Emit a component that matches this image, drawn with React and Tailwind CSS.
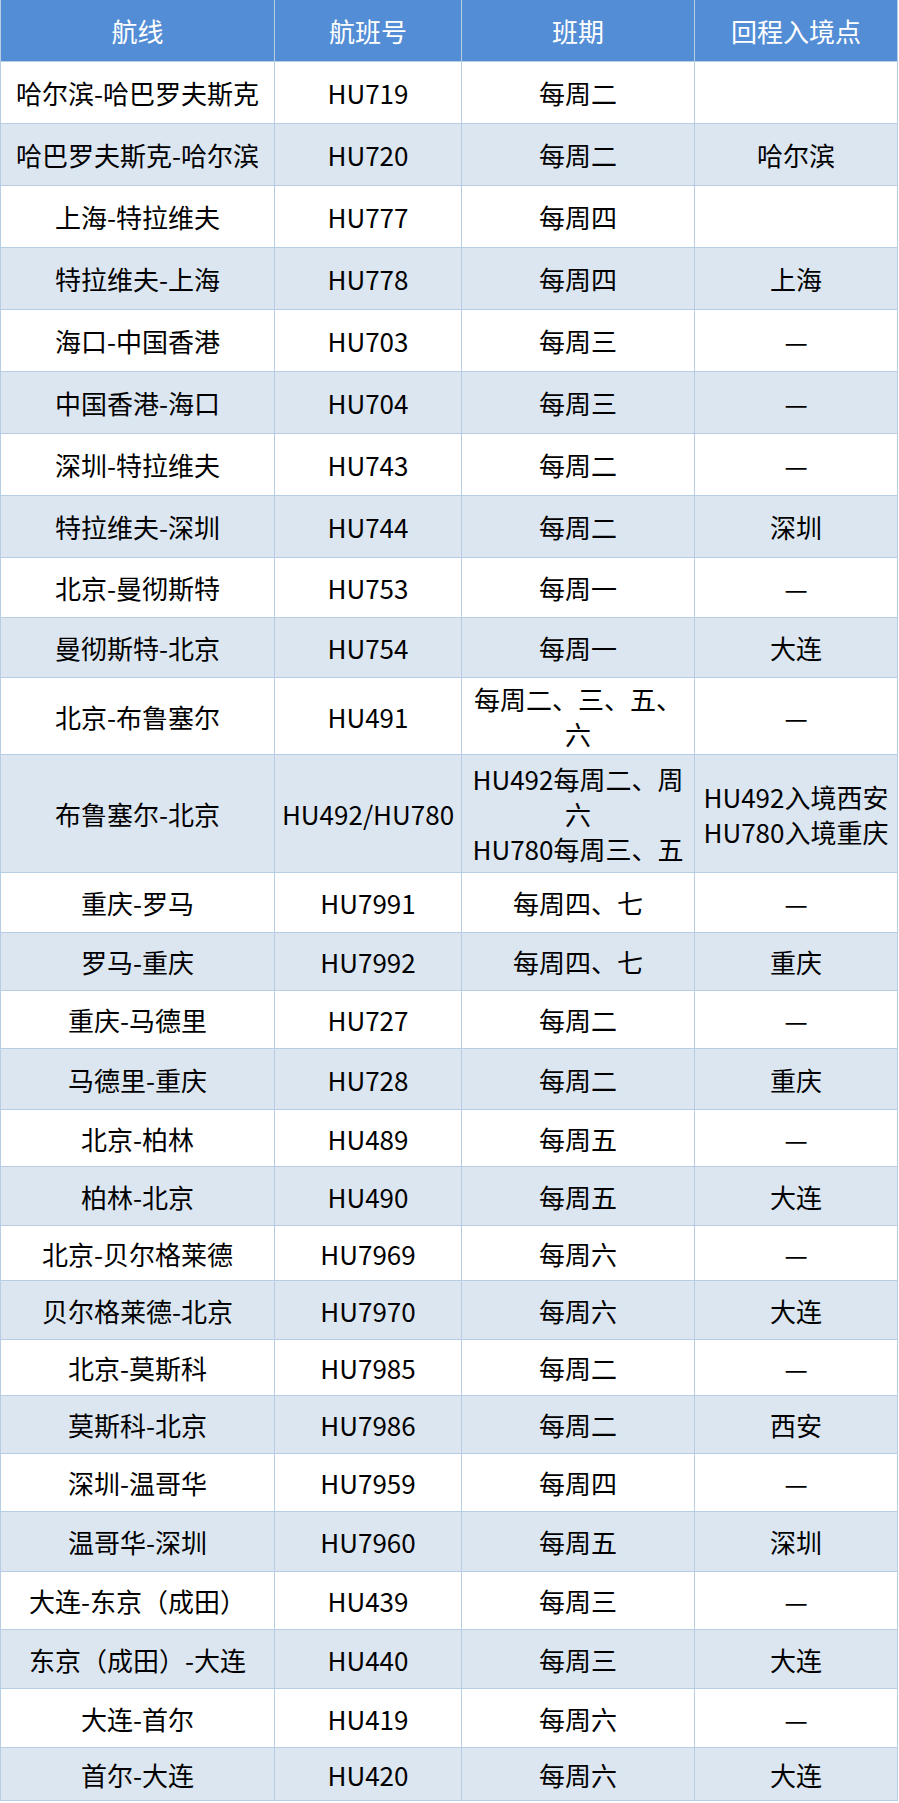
import React from "react";

const rows = [
  ["哈尔滨-哈巴罗夫斯克", "HU719", "每周二", "", "h-[62px]"],
  ["哈巴罗夫斯克-哈尔滨", "HU720", "每周二", "哈尔滨", "h-[62px]"],
  ["上海-特拉维夫", "HU777", "每周四", "", "h-[62px]"],
  ["特拉维夫-上海", "HU778", "每周四", "上海", "h-[62px]"],
  ["海口-中国香港", "HU703", "每周三", "—", "h-[62px]"],
  ["中国香港-海口", "HU704", "每周三", "—", "h-[62px]"],
  ["深圳-特拉维夫", "HU743", "每周二", "—", "h-[62px]"],
  ["特拉维夫-深圳", "HU744", "每周二", "深圳", "h-[62px]"],
  ["北京-曼彻斯特", "HU753", "每周一", "—", "h-[60px]"],
  ["曼彻斯特-北京", "HU754", "每周一", "大连", "h-[60px]"],
  ["北京-布鲁塞尔", "HU491", "每周二、三、五、六", "—", "h-[77px]"],
  ["布鲁塞尔-北京", "HU492/HU780", "HU492每周二、周六\nHU780每周三、五", "HU492入境西安\nHU780入境重庆", "h-[118px]"],
  ["重庆-罗马", "HU7991", "每周四、七", "—", "h-[60px]"],
  ["罗马-重庆", "HU7992", "每周四、七", "重庆", "h-[58px]"],
  ["重庆-马德里", "HU727", "每周二", "—", "h-[58px]"],
  ["马德里-重庆", "HU728", "每周二", "重庆", "h-[61px]"],
  ["北京-柏林", "HU489", "每周五", "—", "h-[57px]"],
  ["柏林-北京", "HU490", "每周五", "大连", "h-[59px]"],
  ["北京-贝尔格莱德", "HU7969", "每周六", "—", "h-[55px]"],
  ["贝尔格莱德-北京", "HU7970", "每周六", "大连", "h-[59px]"],
  ["北京-莫斯科", "HU7985", "每周二", "—", "h-[56px]"],
  ["莫斯科-北京", "HU7986", "每周二", "西安", "h-[58px]"],
  ["深圳-温哥华", "HU7959", "每周四", "—", "h-[58px]"],
  ["温哥华-深圳", "HU7960", "每周五", "深圳", "h-[60px]"],
  ["大连-东京（成田）", "HU439", "每周三", "—", "h-[58px]"],
  ["东京（成田）-大连", "HU440", "每周三", "大连", "h-[59px]"],
  ["大连-首尔", "HU419", "每周六", "—", "h-[59px]"],
  ["首尔-大连", "HU420", "每周六", "大连", "h-[53px]"],
];

function Cell({ children, last }) {
  return (
    <div
      className={
        "flex items-center justify-center text-center px-[2px] leading-[35px] whitespace-pre-line " +
        (last ? "" : "border-r border-[#b8cce4]")
      }
    >
      {children}
    </div>
  );
}

export default function App() {
  return (
    <div
      className="w-[899px] bg-white text-[26px] text-black"
      style={{ fontFamily: '"Noto Sans CJK SC", "Noto Sans", sans-serif' }}
    >
      <div className="w-[898px] border-l border-r border-[#b8cce4]">
        <div className="grid grid-cols-[274px_187px_233px_202px] h-[62px] bg-[#538dd5] text-white border-b border-[#b8cce4]">
          <Cell>航线</Cell>
          <Cell>航班号</Cell>
          <Cell>班期</Cell>
          <Cell last>回程入境点</Cell>
        </div>
        {rows.map((r, i) => (
          <div
            key={i}
            className={
              "grid grid-cols-[274px_187px_233px_202px] border-b border-[#b8cce4] " +
              r[4] +
              " " +
              (i % 2 === 1 ? "bg-[#dce6f1]" : "bg-white")
            }
          >
            <Cell>{r[0]}</Cell>
            <Cell>{r[1]}</Cell>
            <Cell>{r[2]}</Cell>
            <Cell last>{r[3]}</Cell>
          </div>
        ))}
      </div>
    </div>
  );
}
